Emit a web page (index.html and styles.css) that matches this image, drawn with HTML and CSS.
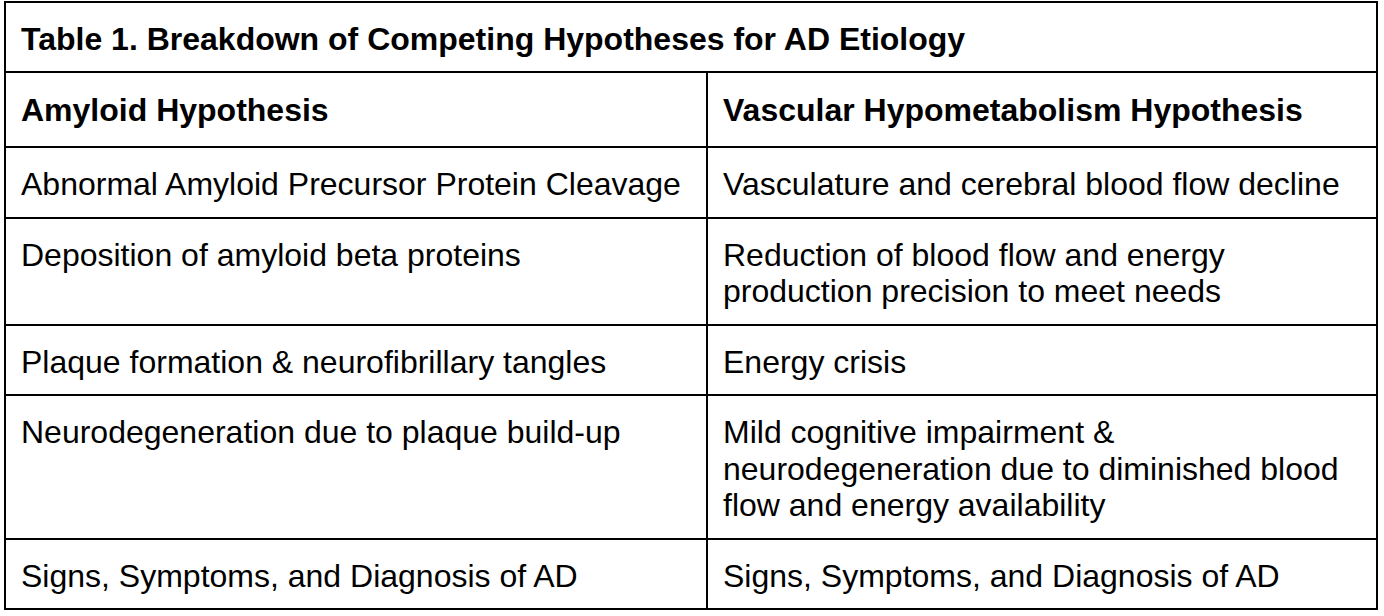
FILE: index.html
```html
<!DOCTYPE html>
<html>
<head>
<meta charset="utf-8">
<link rel="stylesheet" href="styles.css">
</head>
<body>
<table class="hyp">
  <colgroup><col class="col-left"><col class="col-right"></colgroup>
  <tr class="r-title"><th colspan="2">Table 1. Breakdown of Competing Hypotheses for AD Etiology</th></tr>
  <tr class="r-head"><th>Amyloid Hypothesis</th><th>Vascular Hypometabolism Hypothesis</th></tr>
  <tr><td>Abnormal Amyloid Precursor Protein Cleavage</td><td>Vasculature and cerebral blood flow decline</td></tr>
  <tr><td>Deposition of amyloid beta proteins</td><td>Reduction of blood flow and energy production precision to meet needs</td></tr>
  <tr><td>Plaque formation &amp; neurofibrillary tangles</td><td>Energy crisis</td></tr>
  <tr><td>Neurodegeneration due to plaque build-up</td><td>Mild cognitive impairment &amp; neurodegeneration due to diminished blood flow and energy availability</td></tr>
  <tr><td>Signs, Symptoms, and Diagnosis of AD</td><td>Signs, Symptoms, and Diagnosis of AD</td></tr>
</table>
</body>
</html>
```

FILE: styles.css
```css
html, body {
  margin: 0;
  background: #ffffff;
}
body {
  padding: 1px 0 0 4px;
  font-family: "Liberation Sans", Arial, sans-serif;
  font-size: 32px;
  line-height: 36.5px;
  color: #000000;
}
.hyp {
  border-collapse: collapse;
  width: 1374px;
  table-layout: fixed;
}
.col-left {
  width: 702px;
}
.hyp th, .hyp td {
  border: 2px solid #000000;
  padding: 18px 15px 14px 15px;
  text-align: left;
  vertical-align: top;
  font-weight: normal;
}
.hyp th {
  font-weight: bold;
}
.r-title th {
  padding-top: 18px;
  padding-bottom: 13px;
}
.r-head th {
  padding-top: 19px;
  padding-bottom: 18px;
}
```
